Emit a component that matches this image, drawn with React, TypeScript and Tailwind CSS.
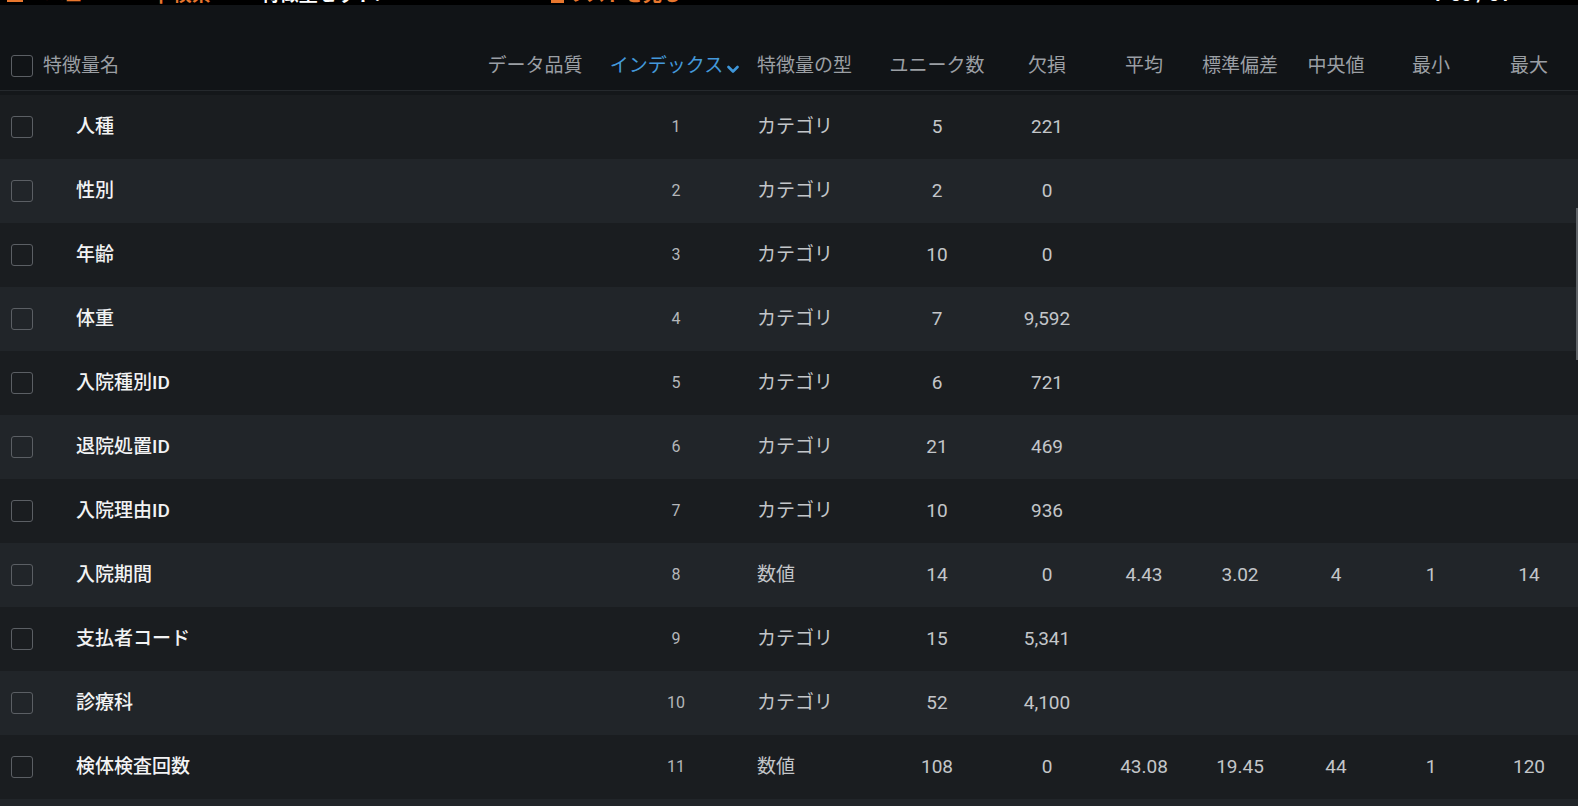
import React from "react";

type Row = {
  idx: number;
  name: string;
  type: string;
  unique: string;
  missing: string;
  mean?: string;
  std?: string;
  median?: string;
  min?: string;
  max?: string;
};

const rows: Row[] = [
  { idx: 1, name: "人種", type: "カテゴリ", unique: "5", missing: "221" },
  { idx: 2, name: "性別", type: "カテゴリ", unique: "2", missing: "0" },
  { idx: 3, name: "年齢", type: "カテゴリ", unique: "10", missing: "0" },
  { idx: 4, name: "体重", type: "カテゴリ", unique: "7", missing: "9,592" },
  { idx: 5, name: "入院種別ID", type: "カテゴリ", unique: "6", missing: "721" },
  { idx: 6, name: "退院処置ID", type: "カテゴリ", unique: "21", missing: "469" },
  { idx: 7, name: "入院理由ID", type: "カテゴリ", unique: "10", missing: "936" },
  { idx: 8, name: "入院期間", type: "数値", unique: "14", missing: "0", mean: "4.43", std: "3.02", median: "4", min: "1", max: "14" },
  { idx: 9, name: "支払者コード", type: "カテゴリ", unique: "15", missing: "5,341" },
  { idx: 10, name: "診療科", type: "カテゴリ", unique: "52", missing: "4,100" },
  { idx: 11, name: "検体検査回数", type: "数値", unique: "108", missing: "0", mean: "43.08", std: "19.45", median: "44", min: "1", max: "120" },
  { idx: 12, name: "", type: "", unique: "", missing: "" },
];

const GRID =
  "grid grid-cols-[43px_427px_130px_152px_130px_110px_110px_84px_108px_84px_106px_90px]";

function Checkbox() {
  return <div className="w-[22px] h-[22px] rounded-[3px] border border-[#5b5f64] ml-[11px]" />;
}

function Chevron() {
  return (
    <svg width="12" height="9" viewBox="0 0 12 9" className="ml-[4px] mt-[6px]">
      <path d="M1.5 2 L6 6.5 L10.5 2" stroke="#3f97da" strokeWidth="2.6" fill="none" strokeLinecap="round" strokeLinejoin="round" />
    </svg>
  );
}

export default function App() {
  const font = { fontFamily: "Roboto, 'Noto Sans CJK JP', 'Noto Sans', sans-serif" };
  return (
    <div className="relative w-[1578px] h-[806px] overflow-hidden bg-[#111417]" style={font}>
      {/* cut-off toolbar */}
      <div className="relative h-[5px] bg-black">
        <div className="absolute left-0 top-[-17px] w-full h-[24px] flex items-end text-[19px] leading-[24px] font-bold whitespace-nowrap">
          <span className="ml-[7px] text-[#e8772e] flex items-center">
            <span className="inline-block w-[16px] h-[14px] border-[3px] border-[#e8772e] mr-[22px]" />
            ニュー
          </span>
          <span className="ml-[52px] text-[#e8772e]">⚲ 検索</span>
          <span className="ml-[50px] text-white">特徴量セット:</span>
          <span className="ml-[171px] text-[#e8772e] flex items-center">
            <span className="inline-block w-[13px] h-[15px] border-[3px] border-[#e8772e] mr-[3px]" />
            リストを見る
          </span>
          <span className="ml-auto mr-[8px] text-[#888] text-[14px]">‹</span>
          <span className="mr-[44px] text-white">1-50 / 51</span>
          <span className="mr-[18px] text-white">›</span>
        </div>
      </div>

      {/* header */}
      <div className={`${GRID} h-[86px] pt-[37px] items-center text-[19px] text-[#9b9fa4] border-b border-[#25292d]`}>
        <div className="flex items-center">
          <Checkbox />
        </div>
        <div className="flex items-center whitespace-nowrap">特徴量名</div>
        <div className="flex justify-center whitespace-nowrap">データ品質</div>
        <div className="flex justify-center items-center whitespace-nowrap text-[#4499da] pr-[3px]">
          インデックス
          <Chevron />
        </div>
        <div className="pl-[5px] whitespace-nowrap">特徴量の型</div>
        <div className="flex justify-center whitespace-nowrap">ユニーク数</div>
        <div className="flex justify-center whitespace-nowrap">欠損</div>
        <div className="flex justify-center whitespace-nowrap">平均</div>
        <div className="flex justify-center whitespace-nowrap">標準偏差</div>
        <div className="flex justify-center whitespace-nowrap">中央値</div>
        <div className="flex justify-center whitespace-nowrap">最小</div>
        <div className="flex justify-center whitespace-nowrap">最大</div>
      </div>
      <div className="h-[4px] bg-[#14171a]" />

      {/* rows */}
      <div className="flex flex-col">
        {rows.map((r, i) => (
          <div
            key={r.idx}
            className={`${GRID} h-[64px] items-center text-[19px] text-[#c3c6c9] ${i % 2 === 0 ? "bg-[#1a1d20]" : "bg-[#212529]"}`}
          >
            <div className="flex items-center">{r.name && <Checkbox />}</div>
            <div className="pl-[33px] text-[#f2f3f4] font-medium whitespace-nowrap">{r.name}</div>
            <div />
            <div className="flex justify-center text-[16px] text-[#b4b7ba]">{r.name ? r.idx : ""}</div>
            <div className="pl-[5px] whitespace-nowrap">{r.type}</div>
            <div className="flex justify-center">{r.unique}</div>
            <div className="flex justify-center">{r.missing}</div>
            <div className="flex justify-center">{r.mean}</div>
            <div className="flex justify-center">{r.std}</div>
            <div className="flex justify-center">{r.median}</div>
            <div className="flex justify-center">{r.min}</div>
            <div className="flex justify-center">{r.max}</div>
          </div>
        ))}
      </div>

      {/* scrollbar thumb */}
      <div className="absolute right-0 top-[208px] w-[2px] h-[152px] bg-[#5f6367]" />
    </div>
  );
}
